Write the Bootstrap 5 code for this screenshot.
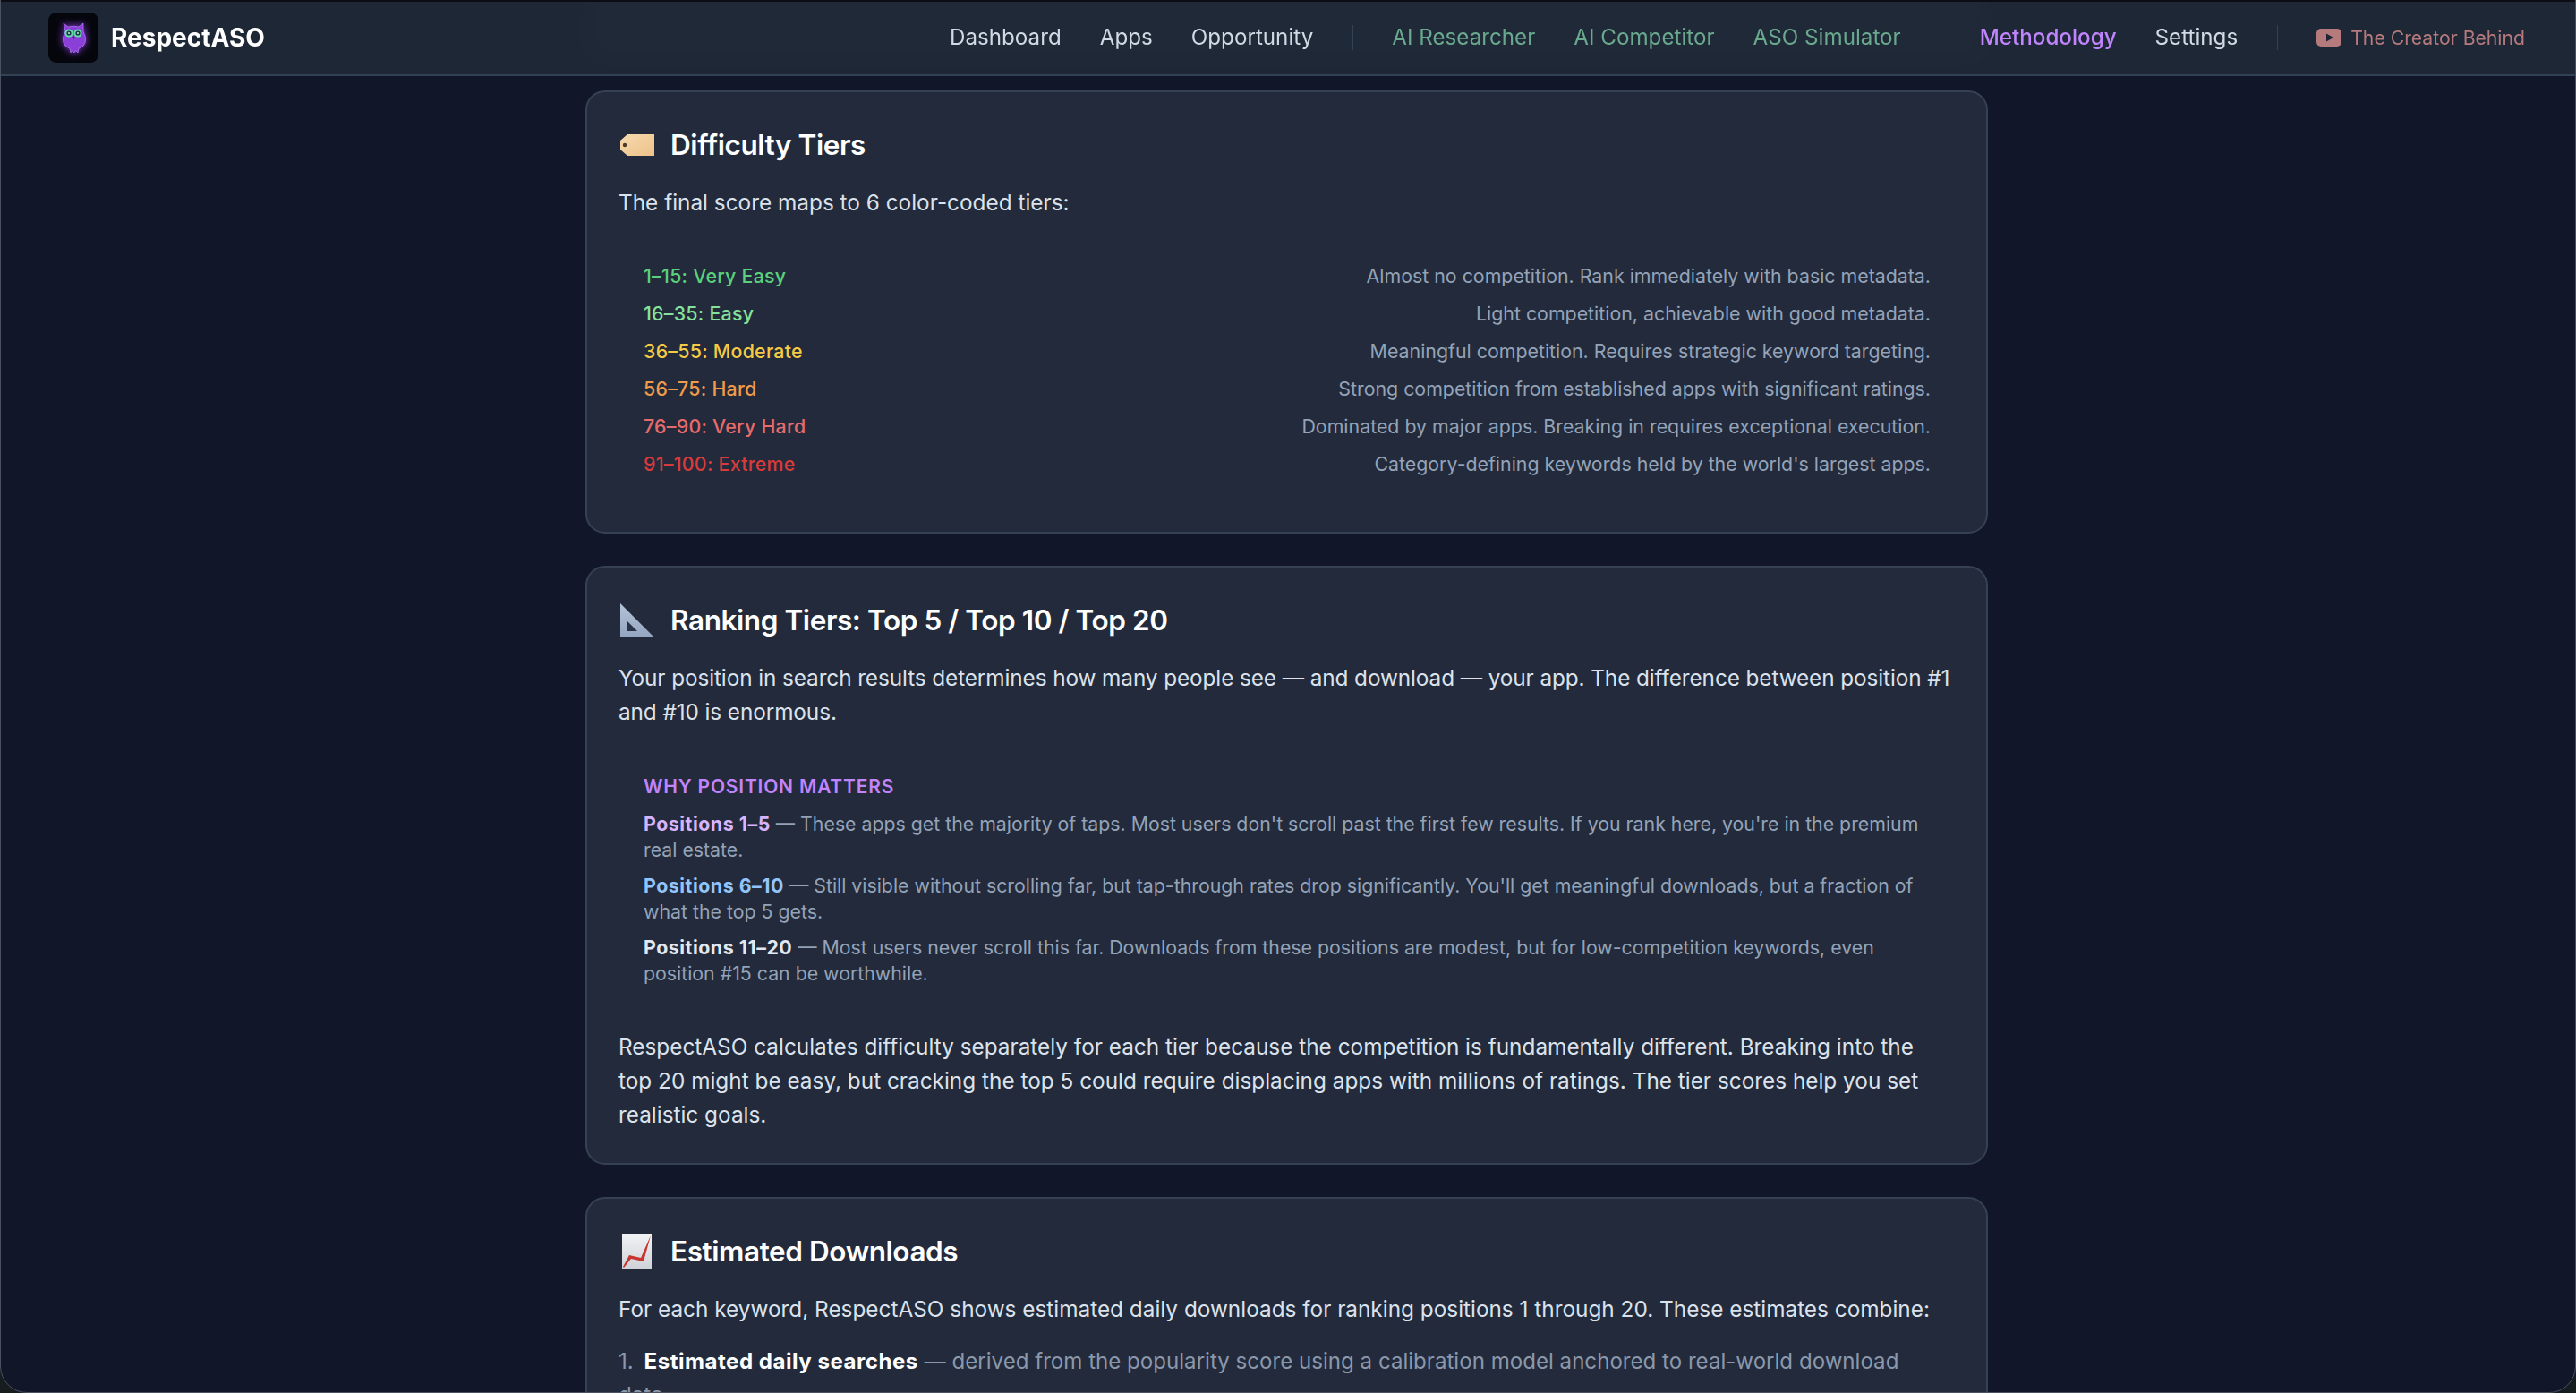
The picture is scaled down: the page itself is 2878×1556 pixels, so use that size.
<!DOCTYPE html>
<html lang="en">
<head>
<meta charset="utf-8">
<title>RespectASO</title>
<link href="https://cdn.jsdelivr.net/npm/bootstrap@5.3.0/dist/css/bootstrap.min.css" rel="stylesheet">
<style>
html,body{height:1556px;overflow:hidden}
body{background:#111729;font-family:Inter,"Liberation Sans",sans-serif;font-size:24.35px;line-height:38px;color:#dbe2ec;border-top:2px solid #0b0d13;padding-right:3px}
.top-bar{position:fixed;top:2px;left:0;right:0;height:83px;background:rgba(31,41,55,.9);backdrop-filter:blur(12px);border-bottom:2px solid #334155;z-index:10;padding:0 57px 1px 54px}
.brand-logo{width:56px;height:56px;border-radius:9px;background:#05060c;display:flex;align-items:center;justify-content:center;margin-right:14px}
.brand-logo svg{filter:drop-shadow(0 0 4px #8b3fe0)}
.brand-name{font-size:28px;font-weight:700;color:#fff}
.nav-item-link{color:#d1d9e4;text-decoration:none;font-size:24.2px;margin-left:43px}
.nav-ai{color:#6aa98e}
.nav-active{color:#c084fc;font-weight:500}
.nav-rule{width:1px;height:28px;background:#334155;margin-left:44px}
.creator{color:#b57a7c;font-size:21.2px;margin-left:43px;text-decoration:none}
.creator svg{margin-right:10px}
.page-wrap{width:1567px;margin:0 auto}
.peek{height:67px;background:#212a3b;border:2px solid #303a4d;border-top:0;border-radius:0 0 22px 22px;margin-bottom:32px}
.doc-card{background:#222a3b;border:2px solid #374154;border-radius:22px;padding:36px 35px 35px;margin-bottom:36px}
.doc-title{font-size:31.5px;line-height:46px;font-weight:600;letter-spacing:-.42px;color:#fff;display:flex;align-items:center;margin:0 0 22px}
.doc-title svg{flex:none}
.ico-tag,.ico-ruler{margin:0 18px 0 2px}
.ico-chart{margin:0 21px 0 4px}
.doc-card p{margin:0;color:#dbe2ec;font-size:24.35px;line-height:38px}
.line-set{white-space:nowrap}
.doc-card p.line-tight{letter-spacing:-.1px}
.tier-box{padding:42px 27px 20px 28px;font-size:21.35px;line-height:42px}
.tier-name{font-weight:500;letter-spacing:.25px}
.tier-desc{color:#94a3b8}
.why-box{padding:50px 28px 48px;font-size:21.3px;line-height:28.6px;color:#94a3b8}
.why-head{color:#c084fc;font-size:21px;font-weight:600;letter-spacing:.8px;margin-bottom:13px;line-height:29px}
.why-item{margin-bottom:12px}
.why-item:last-child{margin-bottom:0}
.why-item b{font-weight:700;letter-spacing:.55px}
.dl-list{margin-top:21px;color:#8b97aa;font-size:24.1px}
.dl-list b{color:#fff;font-weight:700;margin-left:5px;letter-spacing:.5px}
.win-edge{position:fixed;left:0;right:0;top:-80px;bottom:0;border:1px solid #4a5261;border-radius:30px;box-shadow:0 0 0 30px #171c1e;z-index:20;pointer-events:none}
</style>
</head>
<body>
<nav class="top-bar d-flex align-items-center">
  <a class="d-flex align-items-center text-decoration-none" href="#">
    <span class="brand-logo">
      <svg width="30" height="35" viewBox="0 0 30 35"><path d="M4 1l5 4q6-1.500 12 0l5-4v9q4 7 2 13-2 5-7 6l-1 5-2-2-1 0-1 2-2-2-1 0-1 2-1-5q-5-1-7-6-2-6 2-13z" fill="#8a3fd8" stroke="#b074f2" stroke-width=".8"/><circle cx="10" cy="12" r="4.600" fill="#62dba8"/><circle cx="20" cy="12" r="4.600" fill="#62dba8"/><circle cx="10" cy="12" r="2.600" fill="#1a3a4a"/><circle cx="20" cy="12" r="2.600" fill="#1a3a4a"/><circle cx="10" cy="12" r="1" fill="#b7f5d8"/><circle cx="20" cy="12" r="1" fill="#b7f5d8"/><path d="M15 15l-1.500 2 1.500 2 1.500-2z" fill="#2a1248"/></svg>
    </span>
    <span class="brand-name">RespectASO</span>
  </a>
  <div class="ms-auto d-flex align-items-center">
    <a class="nav-item-link" href="#">Dashboard</a>
    <a class="nav-item-link" href="#">Apps</a>
    <a class="nav-item-link" href="#">Opportunity</a>
    <span class="nav-rule"></span>
    <a class="nav-item-link nav-ai" href="#">AI Researcher</a>
    <a class="nav-item-link nav-ai" href="#">AI Competitor</a>
    <a class="nav-item-link nav-ai" href="#">ASO Simulator</a>
    <span class="nav-rule"></span>
    <a class="nav-item-link nav-active" href="#">Methodology</a>
    <a class="nav-item-link" href="#">Settings</a>
    <span class="nav-rule"></span>
    <a class="creator d-flex align-items-center" href="#"><svg width="28" height="20" viewBox="0 0 28 20"><rect width="28" height="20" rx="5" fill="#b57a7c"/><path d="M11 5.500l8 4.500-8 4.500z" fill="#1e2636"/></svg>The Creator Behind</a>
  </div>
</nav>
<main class="page-wrap">
  <div class="peek"></div>

  <section class="doc-card">
    <h2 class="doc-title"><svg class="ico-tag" width="38" height="24" viewBox="0 0 38 24"><defs><linearGradient id="tg" x1="0" y1="0" x2="1" y2="1"><stop offset="0" stop-color="#f6d9ae"/><stop offset="1" stop-color="#eec28a"/></linearGradient></defs><path d="M8 0h30v24H8L0 17V7z" fill="url(#tg)"/><circle cx="5" cy="12" r="2.200" fill="#4a3a2a"/></svg>Difficulty Tiers</h2>
    <p>The final score maps to 6 color-coded tiers:</p>
    <div class="tier-box">
      <div class="d-flex justify-content-between"><span class="tier-name" style="color:#5bd07c">1–15: Very Easy</span><span class="tier-desc">Almost no competition. Rank immediately with basic metadata.</span></div>
      <div class="d-flex justify-content-between"><span class="tier-name" style="color:#86e29b">16–35: Easy</span><span class="tier-desc">Light competition, achievable with good metadata.</span></div>
      <div class="d-flex justify-content-between"><span class="tier-name" style="color:#f6ca45">36–55: Moderate</span><span class="tier-desc">Meaningful competition. Requires strategic keyword targeting.</span></div>
      <div class="d-flex justify-content-between"><span class="tier-name" style="color:#f09a4c">56–75: Hard</span><span class="tier-desc">Strong competition from established apps with significant ratings.</span></div>
      <div class="d-flex justify-content-between"><span class="tier-name" style="color:#e76b6b">76–90: Very Hard</span><span class="tier-desc">Dominated by major apps. Breaking in requires exceptional execution.</span></div>
      <div class="d-flex justify-content-between"><span class="tier-name" style="color:#d93b3b">91–100: Extreme</span><span class="tier-desc">Category-defining keywords held by the world's largest apps.</span></div>
    </div>
  </section>

  <section class="doc-card">
    <h2 class="doc-title"><svg class="ico-ruler" width="38" height="38" viewBox="0 0 38 38"><defs><linearGradient id="rg" x1="0" y1="0" x2="0" y2="1"><stop offset="0" stop-color="#b4c3d8"/><stop offset="1" stop-color="#93a5c0"/></linearGradient></defs><path d="M0 0l38 38H0z" fill="url(#rg)"/><path d="M7 19l12 12H7z" fill="#2a3346"/></svg>Ranking Tiers: Top 5 / Top 10 / Top 20</h2>
    <p class="line-set line-tight">Your position in search results determines how many people see — and download — your app. The difference between position #1<br>and #10 is enormous.</p>
    <div class="why-box">
      <div class="why-head">WHY POSITION MATTERS</div>
      <div class="why-item"><b style="color:#d8b4fe">Positions 1–5</b> — These apps get the majority of taps. Most users don't scroll past the first few results. If you rank here, you're in the premium real estate.</div>
      <div class="why-item"><b style="color:#93c5fd">Positions 6–10</b> — Still visible without scrolling far, but tap-through rates drop significantly. You'll get meaningful downloads, but a fraction of what the top 5 gets.</div>
      <div class="why-item"><b style="color:#e2e8f0">Positions 11–20</b> — Most users never scroll this far. Downloads from these positions are modest, but for low-competition keywords, even position #15 can be worthwhile.</div>
    </div>
    <p class="line-set">RespectASO calculates difficulty separately for each tier because the competition is fundamentally different. Breaking into the<br>top 20 might be easy, but cracking the top 5 could require displacing apps with millions of ratings. The tier scores help you set<br>realistic goals.</p>
  </section>

  <section class="doc-card">
    <h2 class="doc-title"><svg class="ico-chart" width="33" height="39" viewBox="0 0 33 39"><defs><linearGradient id="cg" x1="0" y1="0" x2="0" y2="1"><stop offset="0" stop-color="#f2f3f5"/><stop offset="1" stop-color="#cfd2d8"/></linearGradient></defs><rect width="33" height="39" fill="url(#cg)"/><path d="M1 37l7-13 13 3 11-25-8 29-14-3-8 10z" fill="#c6352e"/></svg>Estimated Downloads</h2>
    <p>For each keyword, RespectASO shows estimated daily downloads for ranking positions 1 through 20. These estimates combine:</p>
    <div class="dl-list">1. <b>Estimated daily searches</b> — derived from the popularity score using a calibration model anchored to real-world download<br>data.</div>
  </section>
</main>
<div class="win-edge"></div>
</body>
</html>
